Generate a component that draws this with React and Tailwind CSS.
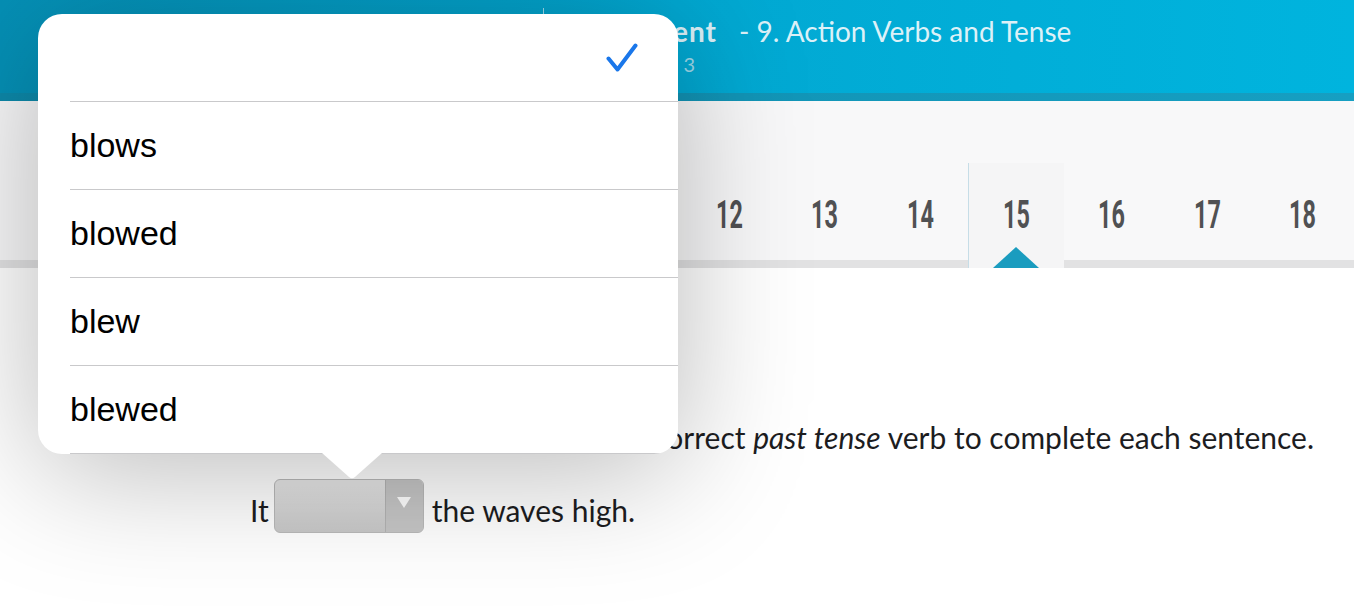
import React from 'react';

const numbers = [5, 6, 7, 8, 9, 10, 11, 12, 13, 14, 15, 16, 17, 18];
const choices = ['blows', 'blowed', 'blew', 'blewed'];

const Header = () => (
  <div className="h-[101px] flex flex-col">
    <div className="h-[93px] bg-gradient-to-r from-[#0590b6] via-[#02a8d2] to-[#00b4de] flex">
      <div className="w-[543px] shrink-0" />
      <div className="w-px h-3 mt-2 bg-[#9fdcee]" />
      <div className="pl-[15px] pt-[14px] font-['Lato',sans-serif] text-[#dcf1f8]">
        <div className="text-[28px] leading-[34px] whitespace-nowrap">
          <span className="font-bold tracking-[1px] mr-[22px]">Assessment</span>
          <span>- 9. Action Verbs and Tense</span>
        </div>
        <div className="pl-[60px] pt-[3px] text-[20px] leading-[26px] text-[#9ed8ea] whitespace-nowrap">
          Grade <span className="ml-[6px]">3</span>
        </div>
      </div>
    </div>
    <div className="h-[8px] bg-gradient-to-r from-[#0d89aa] to-[#169fc2]" />
  </div>
);

const NumberNav = () => (
  <div className="h-[167px] bg-[#f8f8f9] flex flex-col">
    <div className="flex-1 flex items-end pl-[11.5px]">
      {numbers.map((n) => (
        <div
          key={n}
          className={
            n === 15
              ? 'relative w-[95.67px] h-[105px] -mb-[8px] pb-[8px] border-l border-[#c6dde7] bg-[#f5f5f6] flex items-center justify-center z-10'
              : 'w-[95.67px] h-[97px] flex items-center justify-center'
          }
        >
          <span className="inline-block scale-x-[0.6] font-['Roboto',sans-serif] font-bold text-[39px] leading-none text-[#505153] mt-[8px]">
            {n}
          </span>
          {n === 15 && (
            <svg className="absolute left-1/2 -translate-x-1/2 bottom-0" width="46" height="21" viewBox="0 0 46 21">
              <polygon points="23,0 46,21 0,21" fill="#1a9cbf" />
            </svg>
          )}
        </div>
      ))}
    </div>
    <div className="h-[8px] bg-[#e2e2e3]" />
  </div>
);

const Content = () => (
  <div className="flex-1 bg-white font-['Lato',sans-serif] text-[#1d1d1f]">
    <div className="pt-[152px] pr-[40px] text-right text-[30px] leading-[34px] whitespace-nowrap">
      Choose the correct <em>past tense</em> verb to complete each sentence.
    </div>
    <div className="mt-[24px] pl-[250px] flex items-center gap-2 text-[30px]">
      <span className="mt-[10px] -mr-[3px]">It</span>
      <div className="w-[150px] h-[54px] rounded-[6px] border border-[#b9b9b9] bg-gradient-to-b from-[#e8e8e8] to-[#c8c8c8] flex overflow-hidden">
        <div className="flex-1" />
        <div className="w-[38px] border-l border-[#b3b3b3] bg-[#c6c6c6] flex justify-center pt-[17px]">
          <svg width="14" height="11" viewBox="0 0 14 11">
            <polygon points="0,0 14,0 7,11" fill="#ffffff" />
          </svg>
        </div>
      </div>
      <span className="mt-[10px]">the waves high.</span>
    </div>
  </div>
);

const Popover = () => (
  <div className="absolute left-[38px] top-[14px] w-[640px]">
    <div className="h-[440px] rounded-[24px] bg-white overflow-hidden shadow-[0_16px_130px_rgba(0,0,0,0.28)] font-['Liberation_Sans',Arial,sans-serif] text-black">
      <div className="h-[87px] flex items-center justify-end pr-[40px]">
        <svg width="32" height="30" viewBox="0 0 32 30" fill="none">
          <path d="M2.5 15.5 L11.5 26.5 L29.5 2.5" stroke="#1a77ea" strokeWidth="4" strokeLinecap="round" strokeLinejoin="round" />
        </svg>
      </div>
      {choices.map((c, i) => (
        <div
          key={c}
          className={
            i === choices.length - 1
              ? 'ml-[32px] h-[89px] border-y border-[#c9c9cb] flex items-center text-[34px]'
              : 'ml-[32px] h-[88px] border-t border-[#c9c9cb] flex items-center text-[34px]'
          }
        >
          {c}
        </div>
      ))}
    </div>
    <svg className="absolute left-[284px] top-[439px]" width="60" height="26" viewBox="0 0 60 26">
      <path d="M0 0 L60 0 L33 24 Q30 26.5 27 24 Z" fill="#ffffff" />
    </svg>
  </div>
);

export default function App() {
  return (
    <div className="relative w-[1354px] h-[607px] overflow-hidden flex flex-col bg-white">
      <Header />
      <NumberNav />
      <Content />
      <Popover />
    </div>
  );
}
